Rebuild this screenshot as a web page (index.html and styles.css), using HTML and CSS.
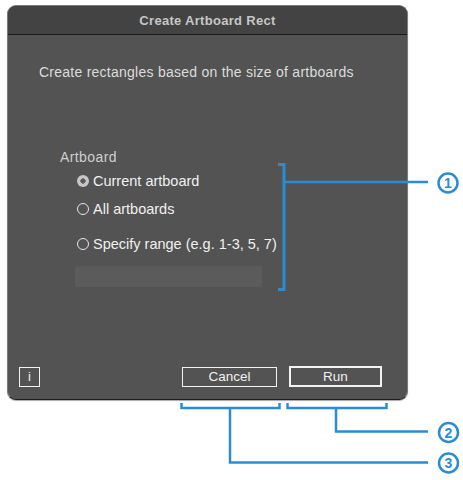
FILE: index.html
```html
<!DOCTYPE html>
<html>
<head>
<meta charset="utf-8">
<link rel="stylesheet" href="styles.css">
</head>
<body>
<div class="stage">
  <div class="window">
    <div class="titlebar">Create Artboard Rect</div>
    <div class="content">
      <p class="desc">Create rectangles based on the size of artboards</p>
      <div class="group">
        <div class="group-label">Artboard</div>
        <div class="radio checked"><span class="dot"></span><span>Current artboard</span></div>
        <div class="radio"><span class="dot"></span><span>All artboards</span></div>
        <div class="radio range"><span class="dot"></span><span>Specify range (e.g. 1-3, 5, 7)</span></div>
        <div class="field"></div>
      </div>
      <div class="footer">
        <div class="btn info">i</div>
        <div class="spacer"></div>
        <div class="btn cancel">Cancel</div>
        <div class="btn run">Run</div>
      </div>
    </div>
  </div>
  <svg class="notes" width="463" height="480" viewBox="0 0 463 480">
    <g fill="none" stroke="#2a8dd4" stroke-width="2.5">
      <path d="M278 164.5 H284 V289.5 H278" stroke-width="3"/>
      <path d="M284 182 H428"/>
      <path d="M181.5 403 V408 H279.5 V403"/>
      <path d="M287.5 403 V408 H386.5 V403"/>
      <path d="M336 408 V431.5 H428"/>
      <path d="M230 408 V462.5 H428"/>
      <circle cx="448" cy="183" r="9.5"/>
      <circle cx="448.5" cy="432.5" r="9.5"/>
      <circle cx="448.5" cy="463" r="9.5"/>
    </g>
    <g fill="#2a8dd4" font-family="Liberation Sans, Arial, sans-serif" font-weight="bold" font-size="14" text-anchor="middle">
      <text x="448" y="188">1</text>
      <text x="448.5" y="437.5">2</text>
      <text x="448.5" y="468">3</text>
    </g>
  </svg>
</div>
</body>
</html>
```

FILE: styles.css
```css
html, body {
  margin: 0;
  padding: 0;
  background: #ffffff;
}
body {
  font-family: "Liberation Sans", Arial, sans-serif;
}
.stage {
  position: relative;
  width: 463px;
  height: 480px;
  padding: 5px 0 0 7px;
  box-sizing: border-box;
}
.window {
  width: 401px;
  height: 395px;
  box-sizing: border-box;
  border: 1px solid #7c7c7c;
  border-bottom-color: #1c1c1c;
  border-radius: 9px;
  background: #535353;
  overflow: hidden;
  display: flex;
  flex-direction: column;
  box-shadow: 0 1px 1px rgba(0,0,0,0.35);
}
.titlebar {
  height: 27px;
  flex: none;
  background: #434343;
  border-bottom: 1px solid #1a1a1a;
  color: #c6c6c6;
  font-size: 13px;
  font-weight: bold;
  letter-spacing: 0.3px;
  display: flex;
  align-items: center;
  justify-content: center;
  padding-top: 1px;
}
.content {
  flex: 1;
  display: flex;
  flex-direction: column;
}
.desc {
  margin: 29px 0 0 31px;
  font-size: 14px;
  line-height: 16px;
  color: #dcdcdc;
  letter-spacing: 0.25px;
}
.group {
  margin: 69px 0 0 52px;
  display: flex;
  flex-direction: column;
}
.group-label {
  font-size: 14px;
  line-height: 16px;
  color: #cfcfcf;
  letter-spacing: 0.4px;
}
.radio {
  display: flex;
  align-items: center;
  gap: 4px;
  margin-left: 17px;
  height: 18px;
  line-height: 18px;
  font-size: 14.5px;
  color: #f0f0f0;
  margin-top: 7px;
}
.radio + .radio {
  margin-top: 10px;
}
.radio.range {
  margin-top: 17px;
}
.dot {
  width: 12px;
  height: 12px;
  box-sizing: border-box;
  border: 1px solid #e6e6e6;
  border-radius: 50%;
  flex: none;
}
.radio.checked .dot {
  border: none;
  background: radial-gradient(circle, #5c5c5c 0 2.4px, #c6c6c6 2.9px);
}
.field {
  margin: 13px 0 0 15px;
  width: 187px;
  height: 21px;
  background: #5b5b5b;
  border-radius: 2px;
}
.footer {
  margin-top: auto;
  margin-bottom: 12px;
  display: flex;
  align-items: center;
  padding: 0 25px 0 11px;
  gap: 12px;
}
.spacer {
  flex: 1;
}
.btn {
  height: 20px;
  box-sizing: border-box;
  border: 1.5px solid #f2f2f2;
  color: #f0f0f0;
  font-size: 13.5px;
  display: flex;
  align-items: center;
  justify-content: center;
}
.btn.info {
  width: 21px;
  font-size: 13px;
}
.btn.cancel {
  width: 95px;
}
.btn.run {
  width: 93px;
  border-width: 2px;
  height: 21px;
}
.notes {
  position: absolute;
  left: 0;
  top: 0;
  pointer-events: none;
}
```
